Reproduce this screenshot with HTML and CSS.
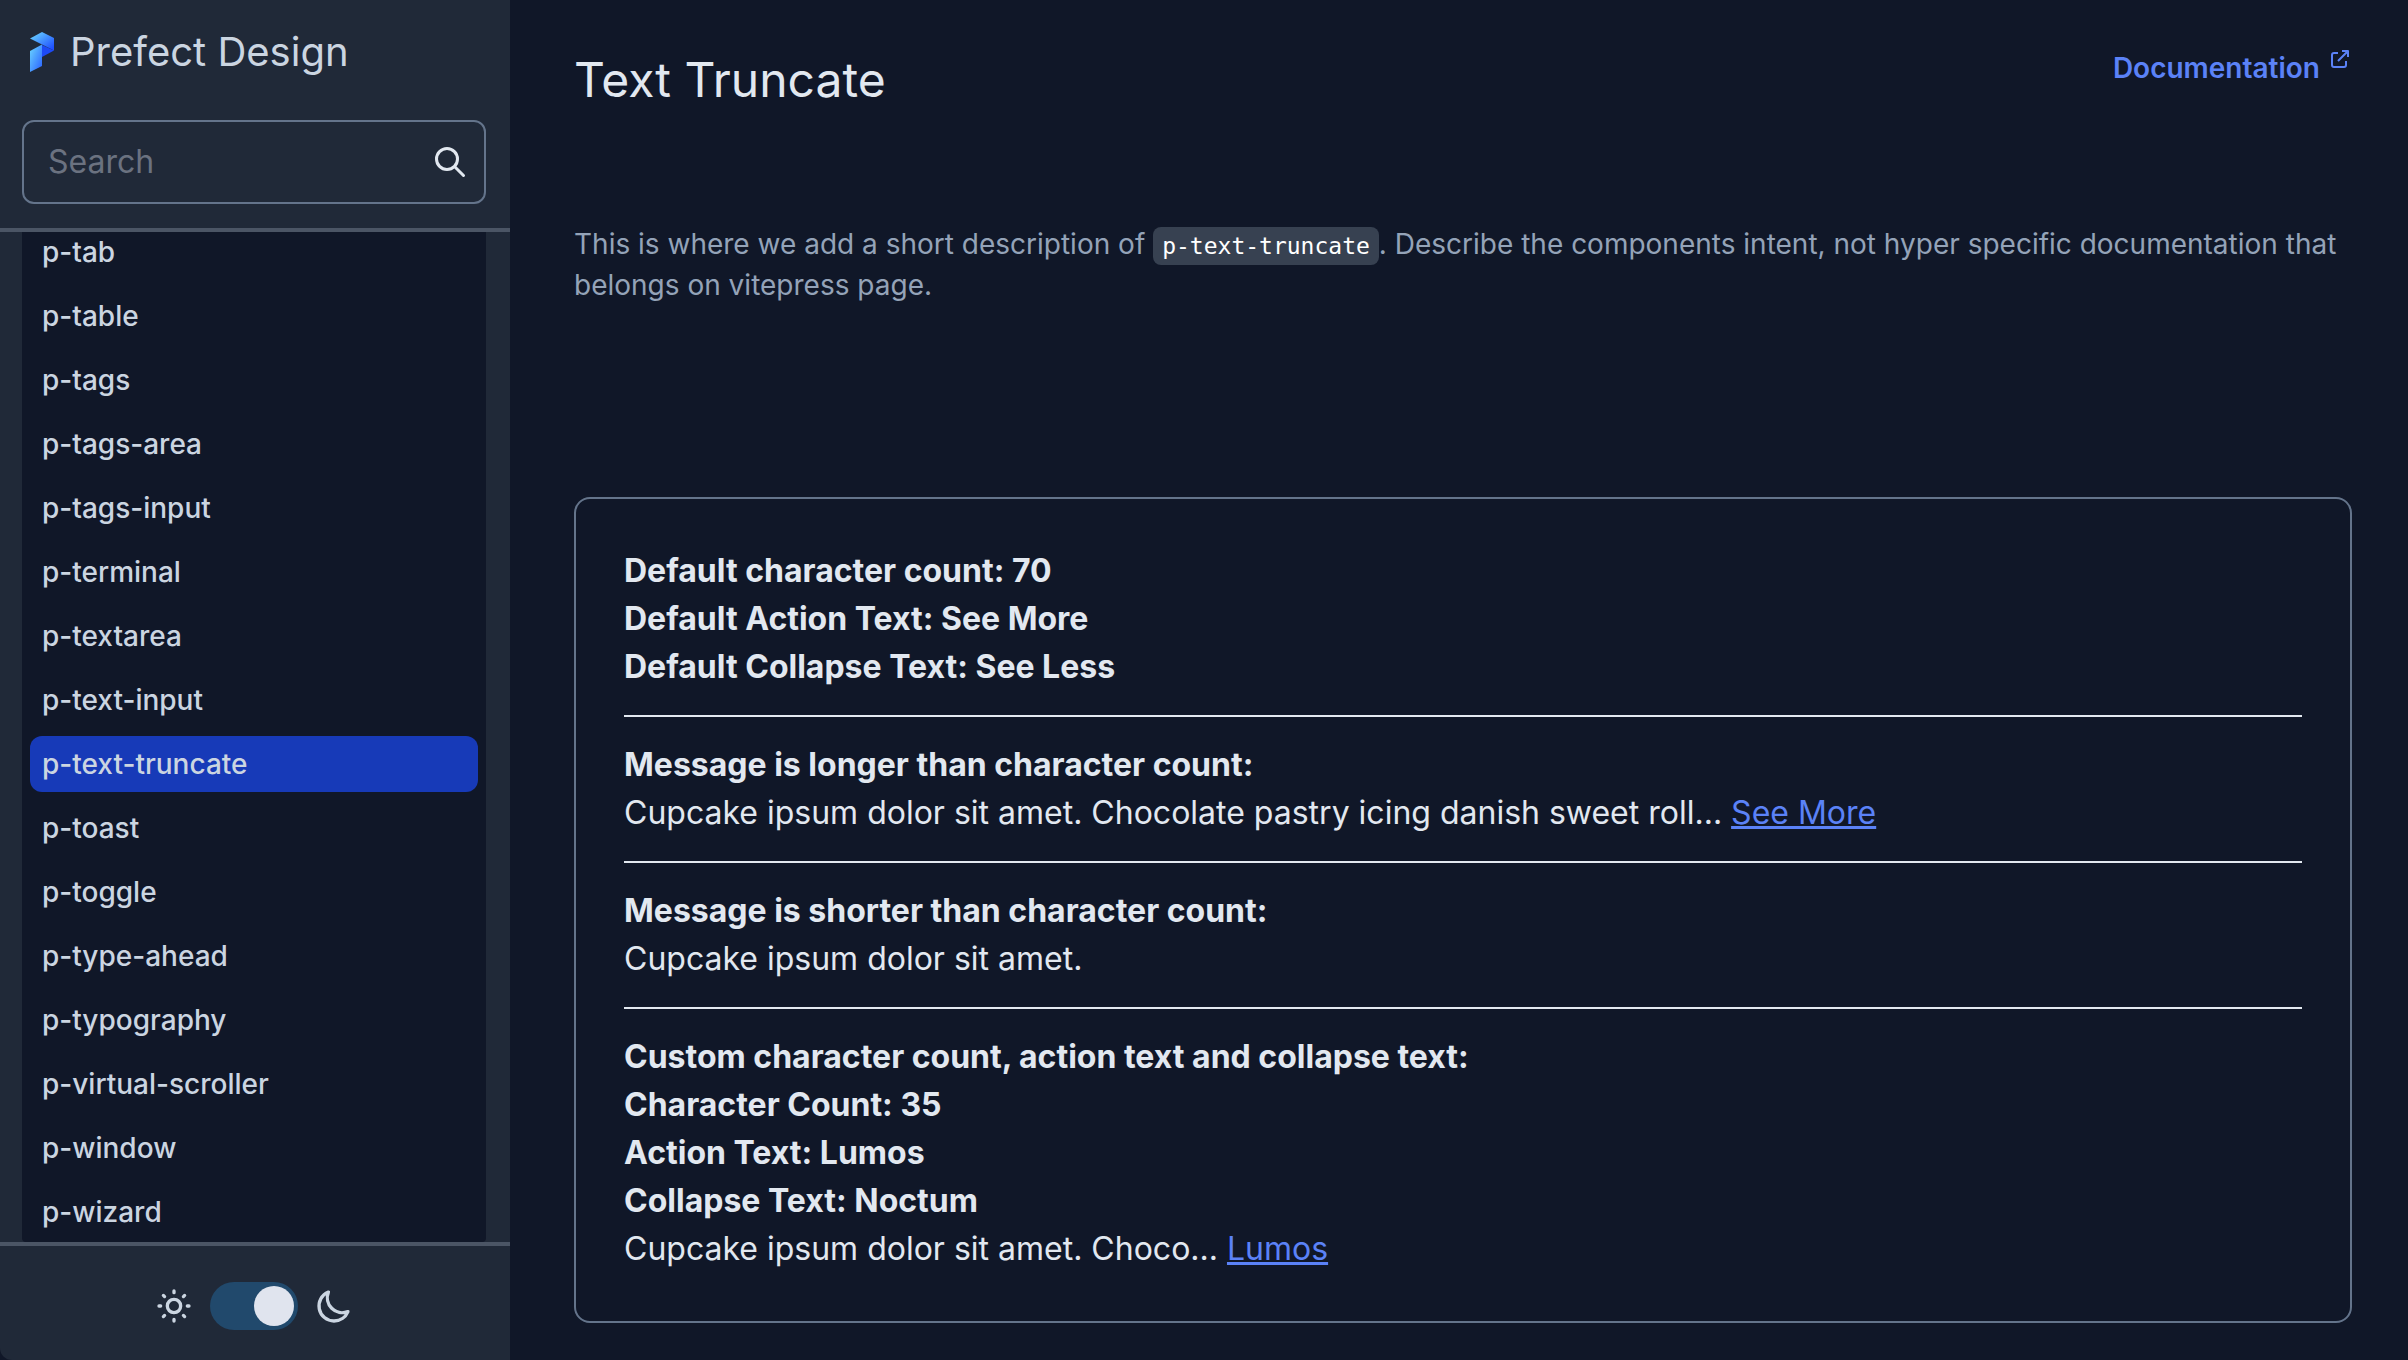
FILE: index.html
```html
<!DOCTYPE html>
<html lang="en">
  <head>
    <meta charset="UTF-8" />
    <meta name="viewport" content="width=device-width, initial-scale=1.0" />
    <title>Text Truncate - Prefect Design</title>
    <link rel="stylesheet" href="styles.css">
  </head>
  <body>
    <div class="app">
      <aside class="sidebar">
        <header class="sidebar-header">
          <a class="brand" href="#">
            <svg class="brand-logo" viewBox="0 0 24 40" aria-hidden="true">
              <defs>
                <linearGradient id="logoTop" x1="0" y1="0" x2="1" y2="1">
                  <stop offset="0.1" stop-color="#66ceff" />
                  <stop offset="0.9" stop-color="#1f50ff" />
                </linearGradient>
                <linearGradient id="logoLeft" x1="0" y1="0" x2="1" y2="1">
                  <stop offset="0" stop-color="#6bd6ff" />
                  <stop offset="0.9" stop-color="#2f6bff" />
                </linearGradient>
              </defs>
              <path d="M12 13 24 18.500 12 25z" fill="#1d4af5" />
              <path d="M0 6.500 12 0 24 6v12.500z" fill="url(#logoTop)" />
              <path d="M0 19 12 12.500V34L0 40z" fill="url(#logoLeft)" />
            </svg>
            <span>Prefect Design</span>
          </a>
          <div class="search">
            <input type="text" id="search" name="search" placeholder="Search" aria-label="Search" />
            <svg class="search-icon" viewBox="0 0 24 24" aria-hidden="true">
              <path d="M21 21l-6-6m2-5a7 7 0 11-14 0 7 7 0 0114 0z" />
            </svg>
          </div>
        </header>

        <nav class="nav">
          <a href="#">p-tab</a>
          <a href="#">p-table</a>
          <a href="#">p-tags</a>
          <a href="#">p-tags-area</a>
          <a href="#">p-tags-input</a>
          <a href="#">p-terminal</a>
          <a href="#">p-textarea</a>
          <a href="#">p-text-input</a>
          <a href="#" class="active">p-text-truncate</a>
          <a href="#">p-toast</a>
          <a href="#">p-toggle</a>
          <a href="#">p-type-ahead</a>
          <a href="#">p-typography</a>
          <a href="#">p-virtual-scroller</a>
          <a href="#">p-window</a>
          <a href="#">p-wizard</a>
        </nav>

        <footer class="sidebar-footer">
          <svg class="icon" viewBox="0 0 24 24" aria-hidden="true">
            <path d="M12 3v1m0 16v1m9-9h-1M4 12H3m15.364 6.364l-.707-.707M6.343 6.343l-.707-.707m12.728 0l-.707.707M6.343 17.657l-.707.707M16 12a4 4 0 11-8 0 4 4 0 018 0z" />
          </svg>
          <input type="checkbox" class="toggle" id="dark-mode" aria-label="Dark mode" checked />
          <svg class="icon" viewBox="0 0 24 24" aria-hidden="true">
            <path d="M20.354 15.354A9 9 0 018.646 3.646 9.003 9.003 0 0012 21a9.003 9.003 0 008.354-5.646z" />
          </svg>
        </footer>
      </aside>

      <main class="content">
        <div class="page-heading">
          <h1>Text Truncate</h1>
          <a class="docs-link" href="#">
            Documentation
            <svg viewBox="-1 -1 20 20" aria-hidden="true">
              <path d="M7 3H3a2 2 0 00-2 2v10a2 2 0 002 2h10a2 2 0 002-2v-4M11 1h6v6M17 1L7 11" />
            </svg>
          </a>
        </div>

        <p class="description">
          This is where we add a short description of <code>p-text-truncate</code>. Describe the components intent, not hyper specific documentation that belongs on vitepress page.
        </p>

        <section class="demo">
          <p><strong>Default character count: 70</strong></p>
          <p><strong>Default Action Text: See More</strong></p>
          <p><strong>Default Collapse Text: See Less</strong></p>
          <hr />
          <p><strong>Message is longer than character count:</strong></p>
          <p>Cupcake ipsum dolor sit amet. Chocolate pastry icing danish sweet roll... <a href="#">See More</a></p>
          <hr />
          <p><strong>Message is shorter than character count:</strong></p>
          <p>Cupcake ipsum dolor sit amet.</p>
          <hr />
          <p><strong>Custom character count, action text and collapse text:</strong></p>
          <p><strong>Character Count: 35</strong></p>
          <p><strong>Action Text: Lumos</strong></p>
          <p><strong>Collapse Text: Noctum</strong></p>
          <p>Cupcake ipsum dolor sit amet. Choco... <a href="#">Lumos</a></p>
        </section>
      </main>
    </div>
  </body>
</html>
```
FILE: styles.css
```css
* {
  box-sizing: border-box;
}
body {
  margin: 0;
  background: #101728;
  color: #e2e8f0;
  font-family: Inter, "Liberation Sans", sans-serif;
  font-size: 32px;
  line-height: 48px;
}
p,
h1 {
  margin: 0;
}
.app {
  display: grid;
  grid-template-columns: 510px minmax(0, 1fr);
  min-height: 100vh;
}

/* sidebar */
.sidebar {
  position: sticky;
  top: 0;
  display: flex;
  flex-direction: column;
  height: 100vh;
  background: #202938;
  color: #cbd5e1;
  border-bottom-left-radius: 12px;
}
.sidebar-header {
  display: flex;
  flex-direction: column;
  gap: 44px;
  padding: 28px 24px 24px 22px;
  border-bottom: 4px solid #4b5565;
}
.brand {
  display: flex;
  align-items: center;
  gap: 16px;
  padding-left: 8px;
  color: inherit;
  font-size: 40px;
  text-decoration: none;
}
.brand-logo {
  width: 24px;
  height: 40px;
}
.search {
  display: flex;
  align-items: center;
  height: 84px;
  padding: 0 16px 0 24px;
  border: 2px solid #64748b;
  border-radius: 12px;
}
.search input {
  flex: 1;
  min-width: 0;
  padding: 0;
  border: none;
  outline: none;
  background: none;
  color: #e2e8f0;
  font: inherit;
}
.search input::placeholder {
  color: #6b7280;
}
.search-icon {
  width: 36px;
  height: 36px;
  fill: none;
  stroke: #e2e8f0;
  stroke-width: 2;
  stroke-linecap: round;
  stroke-linejoin: round;
}
.nav {
  flex: 1;
  min-height: 0;
  display: flex;
  flex-direction: column;
  justify-content: flex-end;
  gap: 8px;
  margin: 0 24px 0 22px;
  padding: 0 8px 2px;
  overflow: hidden;
  background: #101728;
  border-radius: 0 0 4px 4px;
}
.nav a {
  flex: none;
  padding: 8px 12px;
  border-radius: 12px;
  color: inherit;
  font-size: 28px;
  font-weight: 500;
  line-height: 40px;
  text-decoration: none;
}
.nav a.active {
  background: #173ab8;
}
.sidebar-footer {
  display: flex;
  align-items: center;
  justify-content: center;
  gap: 16px;
  padding: 36px 24px 30px 22px;
  border-top: 4px solid #4b5565;
}
.icon {
  width: 40px;
  height: 40px;
  fill: none;
  stroke: #cbd5e1;
  stroke-width: 2;
  stroke-linecap: round;
  stroke-linejoin: round;
}
.toggle {
  appearance: none;
  display: flex;
  width: 88px;
  height: 48px;
  margin: 0;
  padding: 4px;
  border-radius: 24px;
  background: #475569;
  cursor: pointer;
}
.toggle::before {
  content: "";
  width: 40px;
  height: 40px;
  border-radius: 50%;
  background: #e0e4ee;
}
.toggle:checked {
  justify-content: flex-end;
  background: #21496c;
}

/* content */
.content {
  padding: 48px 56px 36px 64px;
}
.page-heading {
  display: flex;
  align-items: flex-start;
  justify-content: space-between;
  margin-bottom: 112px;
}
h1 {
  font-size: 48px;
  font-weight: 400;
  line-height: 64px;
}
.docs-link {
  display: flex;
  align-items: flex-start;
  gap: 10px;
  padding-right: 2px;
  color: #5b82f7;
  font-size: 28px;
  font-weight: 600;
  line-height: 40px;
  text-decoration: none;
}
.docs-link svg {
  width: 20px;
  height: 20px;
  margin-top: 1px;
  fill: none;
  stroke: currentColor;
  stroke-width: 2;
  stroke-linejoin: round;
}
.description {
  margin-bottom: 191px;
  color: #94a3b8;
  font-size: 28px;
  line-height: 41px;
}
code {
  padding: 6px 9px;
  border-radius: 8px;
  background: #374151;
  color: #fff;
  font-family: "DejaVu Sans Mono", monospace;
  font-size: 23px;
  line-height: 1;
}
.demo {
  padding: 48px;
  border: 2px solid #64748b;
  border-radius: 16px;
}
.demo a {
  color: #5b82f7;
}
hr {
  height: 2px;
  margin: 24px 0;
  border: none;
  background: #e2e8f0;
}
```
